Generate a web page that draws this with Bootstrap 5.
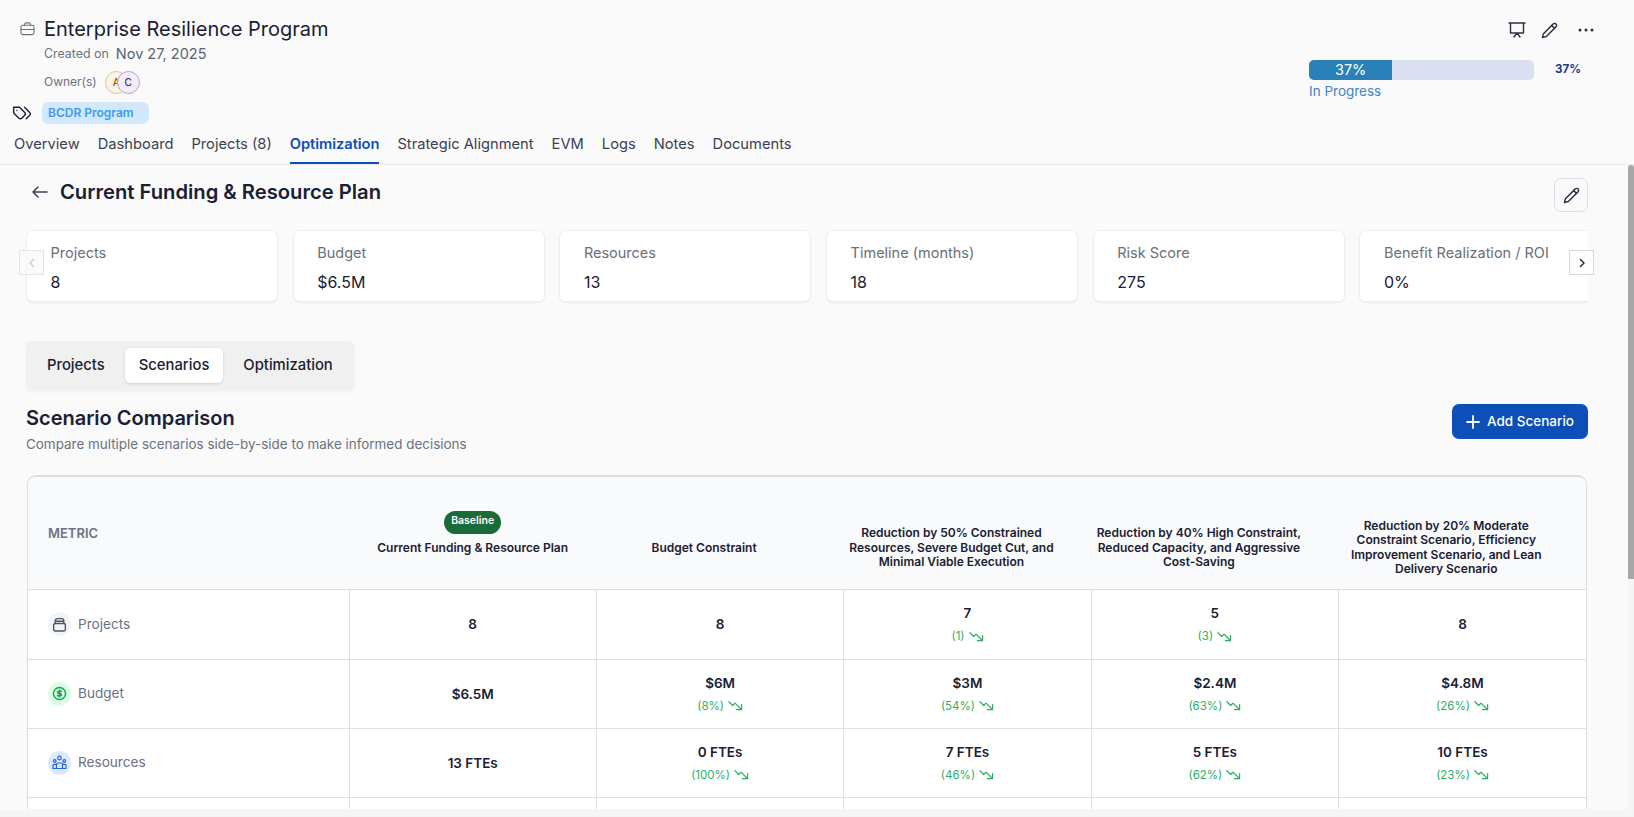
<!DOCTYPE html>
<html lang="en">
<head>
<meta charset="utf-8">
<title>Enterprise Resilience Program</title>
<link href="https://cdn.jsdelivr.net/npm/bootstrap@5.3.0/dist/css/bootstrap.min.css" rel="stylesheet">
<style>
html,body{height:100%;overflow:hidden}
body{font-family:Inter,"Liberation Sans",sans-serif;background:#fafafa;color:#1a2033;display:flex;flex-direction:column;height:817px}
.ico{fill:none;stroke:currentColor;stroke-width:2;stroke-linecap:round;stroke-linejoin:round;flex:none;display:block}
.page-head{height:165px;flex:none;border-bottom:1px solid #e9eaec;padding:14px 0 0 14px;position:relative}
.head-top{display:flex;justify-content:space-between}
.title-line{display:flex;align-items:center;height:30px;padding-left:6px;gap:9px}
.prog-title{font-size:20px;font-weight:400;margin:0;line-height:30px;color:#1a2033}
.sub-line{height:20px;padding-left:30px;display:flex;align-items:center;gap:7px;font-size:12.4px;color:#6b7280}
.sub-line b{font-weight:400;font-size:14.5px;color:#5b6270}
.owner-line{height:24px;margin-top:6px;padding-left:30px;display:flex;align-items:center;gap:8px;font-size:12px;color:#6b7280}
.owner-dots{display:flex}
.owner-dot{width:23px;height:23px;border-radius:50%;display:flex;align-items:center;justify-content:center;font-size:10px;font-weight:500}
.dot-a{background:#fdf3e3;border:1px solid #d9c4a3;color:#8a5a14}
.dot-c{background:#f3ecfb;border:1px solid #b9a0d6;color:#4b1d84;margin-left:-11px;position:relative}
.tag-line{display:flex;align-items:center;gap:10px;margin-top:8px;height:22px;margin-left:-2px}
.tag-pill{background:#d3e9fb;color:#3b9bf0;font-size:12px;font-weight:600;border-radius:6px;height:22px;line-height:22px;padding:0 13px 0 6px;width:107px}
.tab-row{margin-top:8px;gap:18px;flex-wrap:nowrap}
.tab-row .nav-link{padding:0;height:32px;line-height:24px;font-size:14.7px;color:#3a4152;font-weight:400;border-bottom:2px solid transparent}
.tab-row .nav-link.active{color:#0d4fb8;font-weight:600;border-bottom-color:#0d4fb8;letter-spacing:-.05px}
.head-right{width:286px;margin-right:39px;position:relative}
.head-actions{display:flex;justify-content:flex-end;align-items:center;gap:15px;color:#2a3042;height:24px;margin-top:4px}
.bar-line{display:flex;align-items:center;margin-top:18px}
.plan-bar{width:225px;height:20px;background:#dae0f0;border-radius:5px}
.plan-fill{background:#2a80b9;font-size:14.5px;color:#fff;width:37%}
.bar-pct{font-size:11.6px;font-weight:700;color:#1c3a8a;margin-left:21px}
.state-text{font-size:13.5px;color:#3d85c6;line-height:22px}
.main-wrap{height:644px;flex:none;position:relative}
.main-scroll{height:644px;overflow-y:auto;overflow-x:hidden;scrollbar-width:none}
.scroll-track{position:absolute;top:0;right:0;bottom:0;width:6px;background:#f5f5f5}
.scroll-thumb{height:414px;background:#a8a8a8;border-radius:3px 3px 0 0}
.main-inner{padding:13px 46px 163px 26px}
.plan-head{display:flex;justify-content:space-between;align-items:center;height:34px}
.plan-title{display:flex;align-items:center;gap:12px;margin:0;font-size:20.2px;font-weight:600;color:#1a2033;padding:0 0 6px 6px}
.edit-btn{width:34px;height:34px;padding:0;display:flex;align-items:center;justify-content:center;background:#fafafa;border:1px solid #dcdfe5;border-radius:7px;color:#2a3042}
.kpi-wrap{position:relative;margin-top:18px;margin-left:-7px}
.kpi-clip{display:flex;gap:14.7px;overflow:hidden;margin-left:7px;padding:0 0 2px 0}
.kpi-card{flex:0 0 252px;height:72px;border:1px solid #eceef1;border-radius:7px;padding:11px 23.500px;box-shadow:0 1px 2px rgba(0,0,0,.05);background:#fff}
.kpi-card .kpi-name{font-size:14.5px;color:#6b6f76;line-height:22px;white-space:nowrap}
.kpi-card .kpi-val{font-size:16px;color:#1a2033;font-weight:400;line-height:22px;margin-top:7px}
.kpi-arrow{position:absolute;top:20px;width:25px;height:25px;padding:0;background:#fafafa;border:1px solid #dfe1e4;border-radius:0;display:flex;align-items:center;justify-content:center}
.arrow-prev{left:0;color:#c7c9cd;opacity:.85}
.arrow-next{right:-6px;color:#2a3042;background:#fff;border-color:#d6d8dc}
.seg-tabs{display:inline-flex;margin-top:37px;padding:7px;background:#f0f0f0;border-radius:5px;box-shadow:0 2px 4px rgba(0,0,0,.04);gap:6px}
.seg-tabs .nav-link{font-size:14.8px;font-weight:500;color:#1a2033;padding:0 14px;height:35px;line-height:34px;border-radius:5px}
.seg-tabs .nav-link.active{background:#fff;color:#1a2033;box-shadow:0 1px 3px rgba(0,0,0,.14)}
.compare-head{display:flex;justify-content:space-between;margin-top:14px}
.compare-title{font-size:20px;font-weight:600;color:#1a2033;margin:0;line-height:28px}
.compare-sub{font-size:13.45px;color:#6b7280;margin:0;line-height:24px}
.add-btn{background:#0d4fb8;border:0;color:#fff;font-size:13.5px;font-weight:500;height:35px;width:136px;display:flex;align-items:center;justify-content:center;gap:7px;padding:0;border-radius:7px}
.table-shell{margin-top:19px;border:1px solid #dcdee1;border-top-width:2px;border-radius:9px 9px 0 0;overflow:hidden;background:#fff;margin-left:1px;margin-right:1px}
.cmp-table{table-layout:fixed;margin:0;--bs-table-border-color:#e0e0e0;--bs-table-bg:transparent;width:100%}
.cmp-table th,.cmp-table td{border-color:#e0e0e0;vertical-align:middle;text-align:center;padding:0}
.cmp-table thead th{background:#f9fafb;height:112px;font-size:12px;line-height:14.5px;font-weight:600;color:#1a2033;border-width:0 0 1px 0}
.cmp-table tbody td{height:69px;border-width:0 1px 1px 0;background:#fff}
.cmp-table tbody tr:first-child td{height:70px}
.cmp-table tbody td:last-child{border-right:0}
.cmp-table thead th.metric-head{text-align:left;padding-left:20px;font-size:13px;font-weight:600;color:#6b7280}
.cmp-table tbody td.metric-cell{text-align:left;padding-left:20px}
.col-name{padding:30px 36px 0 4px}
.metric-box{display:flex;align-items:center;gap:7px;font-size:13.6px;color:#6b7280}
.metric-icon{width:23px;height:24px;border-radius:50%;display:flex;align-items:center;justify-content:center;flex:none}
.mi-grey{background:#f3f4f6;color:#4b5563}
.mi-green{background:#dcfce7;color:#16a34a}
.mi-blue{background:#dbeafe;color:#2563eb}
.base-pill{background:#1a6b3a;color:#fff;font-size:10.5px;font-weight:600;padding:0;width:57px;height:23px;line-height:20px;display:block;margin:0 auto 7px;border-radius:12px}
.val-main{font-size:13.5px;font-weight:600;color:#1a2033;line-height:20px}
.val-sub{font-size:11.5px;color:#2fae63;line-height:18px;margin-top:4px;display:flex;align-items:center;justify-content:center;gap:4px}
.foot-strip{flex:1;background:#f5f5f5}
</style>
</head>
<body>
<svg width="0" height="0" class="position-absolute">
<symbol id="i-pencil" viewBox="0 0 24 24"><path d="M17 3a2.85 2.83 0 1 1 4 4L7.5 20.5 2 22l1.5-5.5Z"/><path d="m15 5 4 4"/></symbol>
<symbol id="i-trend" viewBox="0 0 16 11"><path d="M1 1.500l4 4 2.500-2.500 6.500 6.500"/><path d="M14.500 4.500v5.500H9"/></symbol>
</svg>

<header class="page-head">
  <div class="head-top">
    <div>
      <div class="title-line">
        <svg class="ico" width="15" height="14" viewBox="0 0 16 15" style="stroke-width:1.2;color:#6b7280"><rect x="1" y="3.5" width="14" height="10" rx="2"/><path d="M5 3.5V2.5A1.5 1.5 0 0 1 6.5 1h3A1.5 1.5 0 0 1 11 2.500v1M1 8h14"/></svg>
        <h1 class="prog-title">Enterprise Resilience Program</h1>
      </div>
      <div class="sub-line"><span>Created on</span><b>Nov 27, 2025</b></div>
      <div class="owner-line"><span>Owner(s)</span>
        <div class="owner-dots"><span class="owner-dot dot-a">A</span><span class="owner-dot dot-c">C</span></div>
      </div>
      <div class="tag-line">
        <svg class="ico" width="20" height="20" viewBox="0 0 24 24" style="stroke-width:1.7;color:#1a2033"><path d="M9 5H2v7l6.29 6.29c.94.94 2.48.94 3.42 0l3.58-3.58c.94-.94.94-2.48 0-3.42L9 5Z"/><path d="M6 9.01V9"/><path d="m15 5 6.3 6.3a2.4 2.4 0 0 1 0 3.4L17 19"/></svg>
        <span class="tag-pill">BCDR Program</span>
      </div>
    </div>
    <div class="head-right">
      <div class="head-actions">
        <svg class="ico" width="18" height="18" viewBox="0 0 18 18" style="stroke-width:1.4"><path d="M1 2h16M2.500 2v10h13V2M6 16l3-4 3 4"/></svg>
        <svg class="ico" width="17" height="17" style="stroke-width:2"><use href="#i-pencil"/></svg>
        <svg width="18" height="18" viewBox="0 0 18 18" fill="currentColor" class="ms-1"><circle cx="3" cy="9" r="1.500"/><circle cx="9" cy="9" r="1.500"/><circle cx="15" cy="9" r="1.500"/></svg>
      </div>
      <div class="bar-line">
        <div class="progress plan-bar"><div class="progress-bar plan-fill">37%</div></div>
        <span class="bar-pct">37%</span>
      </div>
      <div class="state-text">In Progress</div>
    </div>
  </div>
  <ul class="nav tab-row">
    <li class="nav-item"><a class="nav-link" href="#">Overview</a></li>
    <li class="nav-item"><a class="nav-link" href="#">Dashboard</a></li>
    <li class="nav-item"><a class="nav-link" href="#">Projects (8)</a></li>
    <li class="nav-item"><a class="nav-link active" href="#">Optimization</a></li>
    <li class="nav-item"><a class="nav-link" href="#">Strategic Alignment</a></li>
    <li class="nav-item"><a class="nav-link" href="#">EVM</a></li>
    <li class="nav-item"><a class="nav-link" href="#">Logs</a></li>
    <li class="nav-item"><a class="nav-link" href="#">Notes</a></li>
    <li class="nav-item"><a class="nav-link" href="#">Documents</a></li>
  </ul>
</header>

<div class="main-wrap">
<main class="main-scroll">
  <div class="main-inner">
    <div class="plan-head">
      <h2 class="plan-title">
        <svg class="ico" width="16" height="12" viewBox="0 0 16 12" style="stroke-width:1.5;color:#3a4152"><path d="M15 6H1M6 1 1 6l5 5"/></svg>
        Current Funding &amp; Resource Plan
      </h2>
      <button class="btn edit-btn" type="button" aria-label="Edit"><svg class="ico" width="17" height="17"><use href="#i-pencil"/></svg></button>
    </div>

    <div class="kpi-wrap">
      <div class="kpi-clip">
        <div class="card kpi-card"><div class="kpi-name">Projects</div><div class="kpi-val">8</div></div>
        <div class="card kpi-card"><div class="kpi-name">Budget</div><div class="kpi-val">$6.5M</div></div>
        <div class="card kpi-card"><div class="kpi-name">Resources</div><div class="kpi-val">13</div></div>
        <div class="card kpi-card"><div class="kpi-name">Timeline (months)</div><div class="kpi-val">18</div></div>
        <div class="card kpi-card"><div class="kpi-name">Risk Score</div><div class="kpi-val">275</div></div>
        <div class="card kpi-card"><div class="kpi-name">Benefit Realization / ROI</div><div class="kpi-val">0%</div></div>
      </div>
      <button class="btn kpi-arrow arrow-prev" type="button" aria-label="Previous"><svg class="ico" width="10" height="10" viewBox="0 0 10 10" style="stroke-width:1.500"><path d="M6.500 1.500 3 5l3.500 3.500"/></svg></button>
      <button class="btn kpi-arrow arrow-next" type="button" aria-label="Next"><svg class="ico" width="10" height="10" viewBox="0 0 10 10" style="stroke-width:1.500"><path d="M3.500 1.500 7 5 3.500 8.500"/></svg></button>
    </div>

    <ul class="nav seg-tabs">
      <li class="nav-item"><a class="nav-link" href="#">Projects</a></li>
      <li class="nav-item"><a class="nav-link active" href="#">Scenarios</a></li>
      <li class="nav-item"><a class="nav-link" href="#">Optimization</a></li>
    </ul>

    <div class="compare-head">
      <div>
        <h3 class="compare-title">Scenario Comparison</h3>
        <p class="compare-sub">Compare multiple scenarios side-by-side to make informed decisions</p>
      </div>
      <button class="btn add-btn" type="button"><svg class="ico" width="14" height="14" viewBox="0 0 14 14" style="stroke-width:1.800"><path d="M7 1v12M1 7h12"/></svg>Add Scenario</button>
    </div>

    <div class="table-shell">
      <table class="table cmp-table">
        <colgroup><col style="width:321px"><col><col><col><col><col></colgroup>
        <thead>
          <tr>
            <th class="metric-head">METRIC</th>
            <th><span class="badge base-pill">Baseline</span>Current Funding &amp; Resource Plan</th>
            <th><div class="col-name">Budget Constraint</div></th>
            <th><div class="col-name">Reduction by 50% Constrained Resources, Severe Budget Cut, and Minimal Viable Execution</div></th>
            <th><div class="col-name">Reduction by 40% High Constraint, Reduced Capacity, and Aggressive Cost-Saving</div></th>
            <th><div class="col-name">Reduction by 20% Moderate Constraint Scenario, Efficiency Improvement Scenario, and Lean Delivery Scenario</div></th>
          </tr>
        </thead>
        <tbody>
          <tr>
            <td class="metric-cell"><div class="metric-box"><span class="metric-icon mi-grey"><svg class="ico" width="15" height="15" viewBox="0 0 14 14" style="stroke-width:1.300"><rect x="1.500" y="6" width="11" height="7" rx="1.500"/><path d="M3 6V3.500A2 2 0 0 1 5 1.500h4a2 2 0 0 1 2 2V6M3 4h8"/></svg></span>Projects</div></td>
            <td><div class="val-main">8</div></td>
            <td><div class="val-main">8</div></td>
            <td><div class="val-main">7</div><div class="val-sub">(1)<svg class="ico" width="15" height="11" style="stroke-width:1.300"><use href="#i-trend"/></svg></div></td>
            <td><div class="val-main">5</div><div class="val-sub">(3)<svg class="ico" width="15" height="11" style="stroke-width:1.300"><use href="#i-trend"/></svg></div></td>
            <td><div class="val-main">8</div></td>
          </tr>
          <tr>
            <td class="metric-cell"><div class="metric-box"><span class="metric-icon mi-green"><svg class="ico" width="15" height="15" viewBox="0 0 15 15" style="stroke-width:1.400"><circle cx="7.500" cy="7.500" r="6"/><path d="M9.500 5.200H6.700a1.150 1.150 0 0 0 0 2.300h1.600a1.150 1.150 0 0 1 0 2.300H5.500M7.500 4v7"/></svg></span>Budget</div></td>
            <td><div class="val-main">$6.5M</div></td>
            <td><div class="val-main">$6M</div><div class="val-sub">(8%)<svg class="ico" width="15" height="11" style="stroke-width:1.300"><use href="#i-trend"/></svg></div></td>
            <td><div class="val-main">$3M</div><div class="val-sub">(54%)<svg class="ico" width="15" height="11" style="stroke-width:1.300"><use href="#i-trend"/></svg></div></td>
            <td><div class="val-main">$2.4M</div><div class="val-sub">(63%)<svg class="ico" width="15" height="11" style="stroke-width:1.300"><use href="#i-trend"/></svg></div></td>
            <td><div class="val-main">$4.8M</div><div class="val-sub">(26%)<svg class="ico" width="15" height="11" style="stroke-width:1.300"><use href="#i-trend"/></svg></div></td>
          </tr>
          <tr>
            <td class="metric-cell"><div class="metric-box"><span class="metric-icon mi-blue"><svg class="ico" width="15" height="15" viewBox="0 0 15 15" style="stroke-width:1.200"><circle cx="7.500" cy="3" r="1.800"/><circle cx="2.700" cy="6" r="1.300"/><circle cx="12.300" cy="6" r="1.300"/><path d="M4.500 13.500V9.500a1.500 1.500 0 0 1 1.500-1.500h3a1.500 1.500 0 0 1 1.500 1.500v4zM1 13.500v-3a1.200 1.200 0 0 1 1.200-1.200h2.300M14 13.500v-3a1.200 1.200 0 0 0-1.200-1.200h-2.300M1 13.500h13"/></svg></span>Resources</div></td>
            <td><div class="val-main">13 FTEs</div></td>
            <td><div class="val-main">0 FTEs</div><div class="val-sub">(100%)<svg class="ico" width="15" height="11" style="stroke-width:1.300"><use href="#i-trend"/></svg></div></td>
            <td><div class="val-main">7 FTEs</div><div class="val-sub">(46%)<svg class="ico" width="15" height="11" style="stroke-width:1.300"><use href="#i-trend"/></svg></div></td>
            <td><div class="val-main">5 FTEs</div><div class="val-sub">(62%)<svg class="ico" width="15" height="11" style="stroke-width:1.300"><use href="#i-trend"/></svg></div></td>
            <td><div class="val-main">10 FTEs</div><div class="val-sub">(23%)<svg class="ico" width="15" height="11" style="stroke-width:1.300"><use href="#i-trend"/></svg></div></td>
          </tr>
          <tr><td></td><td></td><td></td><td></td><td></td><td></td></tr>
        </tbody>
      </table>
    </div>
  </div>
</main>
<div class="scroll-track"><div class="scroll-thumb"></div></div>
</div>
<div class="foot-strip"></div>
</body>
</html>
